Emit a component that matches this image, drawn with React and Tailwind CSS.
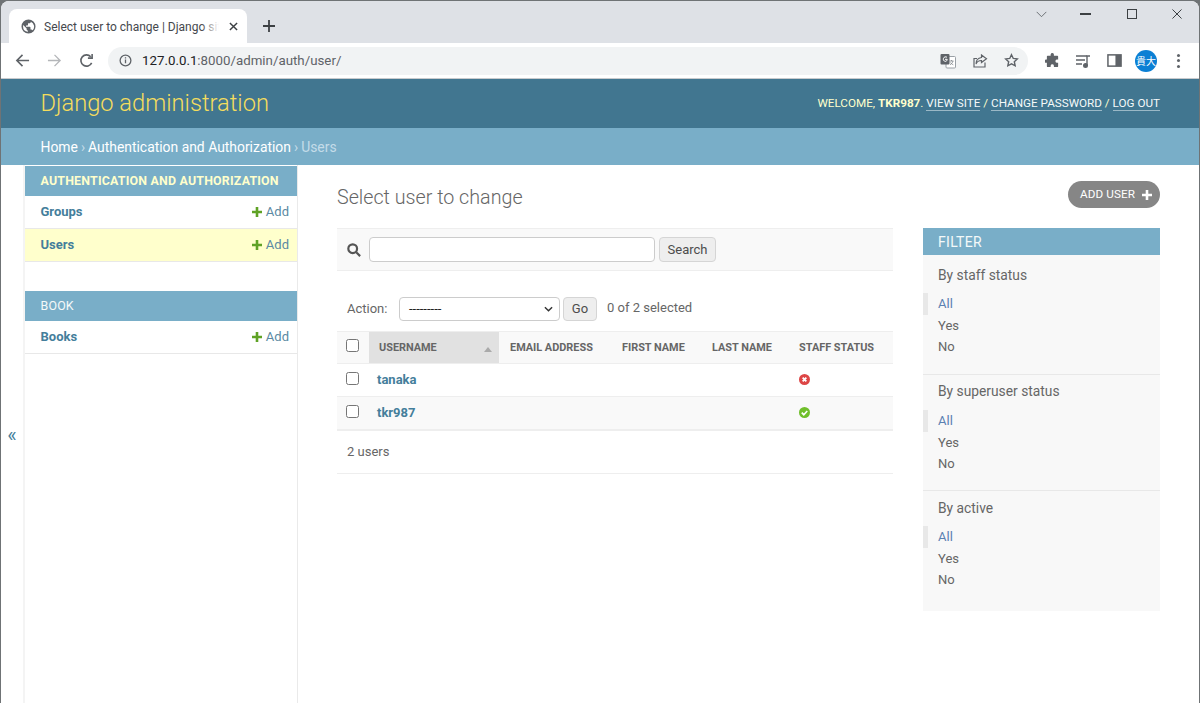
import React from "react";

const font = { fontFamily: "Roboto, sans-serif" };

const Plus = ({ className }) => (
  <svg viewBox="0 0 10 10" className={className} fill="currentColor">
    <path d="M3.7 0h2.6v3.7H10v2.6H6.3V10H3.7V6.3H0V3.7h3.7z" />
  </svg>
);

const SideRow = ({ name, active }) => (
  <div className={`flex items-center justify-between h-[33px] pl-[15.5px] pr-2 border-b border-[#e8e8e8] ${active ? "bg-[#ffffcc]" : "bg-white"}`}>
    <span className="text-[13px] font-bold text-[#447e9b]">{name}</span>
    <span className="flex items-center gap-[4px] text-[13px] text-[#5b8aa3]">
      <Plus className="w-[10px] h-[10px] text-[#5fa225]" />
      Add
    </span>
  </div>
);

const FilterGroup = ({ title, className }) => (
  <div className={`px-[15px] ${className}`}>
    <div className="text-[13.8px] leading-[20px] text-[#666]">{title}</div>
    <div className="mt-[8px] text-[13px] leading-[22px]">
      <div className="relative text-[#5b80b2]">
        <span className="absolute -left-[15px] top-0 w-[5px] h-[22px] bg-[#e8e8e8]" />
        All
      </div>
      <div className="text-[#666] -mt-[0.5px]">Yes</div>
      <div className="text-[#666] -mt-[0.5px]">No</div>
    </div>
  </div>
);

const Check = () => (
  <span className="block w-[13px] h-[13px] rounded-[2.5px] border border-[#767676] bg-white" />
);

const Th = ({ w, children }) => (
  <div className={`${w} pl-2 pt-[1px] flex items-center text-[10.9px] font-bold text-[#666]`}>{children}</div>
);

const UserRow = ({ name, ok, alt }) => (
  <div className={`flex h-[33px] items-center pb-[1px] border-b border-[#eeeeee] ${alt ? "bg-[#f9f9f9]" : "bg-white"}`}>
    <div className="w-[32px] pl-[9px] -mt-[3px]"><Check /></div>
    <div className="w-[430px] pl-2 text-[13px] font-bold text-[#447e9b]">{name}</div>
    <div>
      {ok ? (
        <svg viewBox="0 0 12 12" className="w-[11px] h-[11px]">
          <circle cx="6" cy="6" r="6" fill="#70bf2b" />
          <path d="M3 6.2l2.2 2.2L9 4.4" stroke="#fff" strokeWidth="1.8" fill="none" />
        </svg>
      ) : (
        <svg viewBox="0 0 12 12" className="w-[11px] h-[11px]">
          <circle cx="6" cy="6" r="6" fill="#dd4646" />
          <path d="M4 4l4 4M8 4l-4 4" stroke="#fff" strokeWidth="2" fill="none" />
        </svg>
      )}
    </div>
  </div>
);

const Chrome = () => (
  <div className="shrink-0" style={font}>
    <div className="h-[42px] bg-[#dee1e6] flex items-end pl-[8px] relative">
      <div className="w-[238px] h-[34px] bg-white rounded-t-[8px] flex items-center pl-[12px] pr-[9px]">
        <svg viewBox="0 0 16 16" className="w-[15px] h-[15px] shrink-0 text-[#5f6368]" fill="currentColor">
          <path d="M8 .5a7.5 7.5 0 100 15 7.500 7.500 0 000-15zM2.200 8c0-.6.1-1.100.2-1.600L6 10v.8c0 .8.700 1.500 1.400 1.500v1.400A5.800 5.800 0 012.200 8zm10 4.100c-.2-.6-.7-1-1.400-1h-.7V9c0-.4-.3-.7-.7-.7H5.300V6.800h1.500c.4 0 .7-.3.700-.7V4.600h1.400c.8 0 1.500-.7 1.500-1.500v-.3a5.800 5.800 0 012 9.300z" />
        </svg>
        <span className="relative ml-[8px] pt-[1px] text-[12px] text-[#45484d] whitespace-nowrap overflow-hidden w-[175px]">
          Select user to change | Django site admin
          <span className="absolute right-0 top-0 bottom-0 w-[18px] bg-gradient-to-r from-transparent to-white" />
        </span>
        <svg viewBox="0 0 10 10" className="w-[9px] h-[9px] ml-auto" stroke="#3c4043" strokeWidth="1.6"><path d="M1 1l8 8M9 1l-8 8" /></svg>
      </div>
      <svg viewBox="0 0 12 12" className="w-[12px] h-[12px] ml-[16px] mb-[11px]" stroke="#3c4043" strokeWidth="1.8"><path d="M6 0v12M0 6h12" /></svg>
      <div className="absolute right-0 top-[8px] flex items-center text-[#3c4043]">
        <svg viewBox="0 0 12 8" className="w-[11px] h-[7px] mr-[33px]" stroke="#5f6368" strokeWidth="1" fill="none"><path d="M.5 1L6 6.500 11.500 1" /></svg>
        <div className="w-[11px] h-[1.500px] bg-[#3c4043] mr-[36px]" />
        <div className="w-[10px] h-[10px] border-[1.500px] border-[#3c4043] mr-[35px]" />
        <svg viewBox="0 0 11 11" className="w-[10px] h-[10px] mr-[17px]" stroke="#3c4043" strokeWidth="1.100"><path d="M.5.5l10 10M10.500.500l-10 10" /></svg>
      </div>
    </div>
    <div className="h-[36px] bg-white border-b border-[#c8cacd] flex items-center pl-[14px]">
      <svg viewBox="0 0 16 16" className="w-[15px] h-[15px] text-[#5f6368]" fill="none" stroke="currentColor" strokeWidth="1.700"><path d="M15 8H2M8 2L2 8l6 6" /></svg>
      <svg viewBox="0 0 16 16" className="w-[15px] h-[15px] ml-[17px] text-[#b4b6b9]" fill="none" stroke="currentColor" strokeWidth="1.400"><path d="M1 8h13M8 2l6 6-6 6" /></svg>
      <svg viewBox="0 0 16 16" className="w-[15px] h-[15px] ml-[17px] text-[#5f6368]" fill="none" stroke="currentColor" strokeWidth="1.700"><path d="M13.500 10.500A6 6 0 1112.500 4M14 1v4.500H9.500" /></svg>
      <div className="ml-[14px] w-[920px] h-[28px] rounded-full bg-[#f1f3f4] flex items-center pl-[11px]">
        <svg viewBox="0 0 14 14" className="w-[13px] h-[13px]" fill="none" stroke="#5f6368" strokeWidth="1.400">
          <circle cx="7" cy="7" r="5.800" />
          <path d="M7 6v4M7 3.500v1.400" />
        </svg>
        <span className="ml-[10px] text-[13.3px] text-[#202124]">127.0.0.1<span className="text-[#5f6368]">:8000/admin/auth/user/</span></span>
        <div className="ml-auto flex items-center mr-[9px] gap-[16px] text-[#5f6368]">
          <svg viewBox="0 0 16 16" className="w-[16px] h-[16px]">
            <rect x="6" y="3.500" width="9.500" height="11.500" rx="1" fill="#fff" stroke="#9aa0a6" />
            <path d="M9.500 8h4M11.500 7v1M13 8c-.4 1.600-1.500 3-3 3.700M10.500 9.500c.6 1 1.500 1.800 2.800 2.300" fill="none" stroke="#80868b" strokeWidth=".8" />
            <rect x="0.500" y="1" width="9" height="10.500" rx="1" fill="#5f6368" />
            <path d="M7 4.300A2.300 2.300 0 105.200 8.400c1.200 0 2-.8 2-2.100H5" fill="none" stroke="#fff" strokeWidth="1" />
          </svg>
          <svg viewBox="0 0 16 16" className="w-[16px] h-[16px]" fill="none" stroke="#5f6368" strokeWidth="1.200">
            <path d="M13 9.500v4.500H2V5.500h3M9.500 2l5 3.800-5 3.800V7.500C7 7.500 5 8.500 4 11c0-3.500 2-6 5.500-6.500z" />
          </svg>
          <svg viewBox="0 0 16 16" className="w-[15px] h-[15px]" fill="none" stroke="#5f6368" strokeWidth="1.500">
            <path d="M8 1.800l1.900 4 4.300.5-3.200 3 .9 4.300L8 11.500l-3.900 2.100.9-4.300-3.200-3 4.300-.5z" />
          </svg>
        </div>
      </div>
      <svg viewBox="0 0 16 16" className="w-[15px] h-[15px] ml-[17px]" fill="#5f6368">
        <path d="M6 1.500a1.800 1.800 0 013.500 0V3h3.500c.5 0 1 .5 1 1v3h-1.500a1.800 1.800 0 000 3.500H14V14c0 .5-.5 1-1 1H9.500v-1.500a1.800 1.800 0 00-3.500 0V15H3c-.5 0-1-.5-1-1v-3.500H.8a1.800 1.800 0 010-3.500H2V4c0-.5.500-1 1-1h3z" />
      </svg>
      <svg viewBox="0 0 16 16" className="w-[16px] h-[16px] ml-[15px]" fill="none" stroke="#5f6368" strokeWidth="1.400">
        <path d="M1 3h11M1 7h9M1 11h6" />
        <circle cx="10.500" cy="12.500" r="1.800" fill="#5f6368" />
        <path d="M12 12.500V3h3" />
      </svg>
      <svg viewBox="0 0 16 16" className="w-[15px] h-[15px] ml-[16px]">
        <rect x="1" y="2" width="14" height="12" fill="none" stroke="#5f6368" strokeWidth="1.600" />
        <rect x="9" y="2" width="6" height="12" fill="#5f6368" />
      </svg>
      <div className="ml-[13px] w-[22px] h-[22px] rounded-full bg-[#0b7fd4] text-white text-[10px] flex items-center justify-center" style={{ fontFamily: '"Noto Sans CJK JP", sans-serif' }}>貴大</div>
      <div className="ml-[20px] flex flex-col gap-[2.500px]">
        <span className="w-[3px] h-[3px] rounded-full bg-[#5f6368]" />
        <span className="w-[3px] h-[3px] rounded-full bg-[#5f6368]" />
        <span className="w-[3px] h-[3px] rounded-full bg-[#5f6368]" />
      </div>
    </div>
  </div>
);

export default function App() {
  return (
    <div className="w-[1200px] h-[703px] bg-[#6f7375] overflow-hidden">
      <div className="h-full mx-[1px] mt-[1px] bg-white rounded-tr-[8px] rounded-tl-[8px] overflow-hidden flex flex-col" style={font}>
        <Chrome />
        {/* Django header */}
        <div className="h-[49px] shrink-0 bg-[#417690] flex items-center justify-between pt-[1px] pl-[39.5px] pr-[39px]">
          <span className="text-[23.7px] font-light text-[#f5dd5d]">Django administration</span>
          <span className="text-[11.7px] text-[#ffffcc]">
            WELCOME, <b>TKR987</b>.{" "}
            <span className="text-[#f4f9f9] border-b border-[#9ab8c6]">VIEW SITE</span> /{" "}
            <span className="text-[#f4f9f9] border-b border-[#9ab8c6]">CHANGE PASSWORD</span> /{" "}
            <span className="text-[#f4f9f9] border-b border-[#9ab8c6]">LOG OUT</span>
          </span>
        </div>
        <div className="h-[37px] shrink-0 bg-[#79aec8] flex items-center pt-[1px] pl-[39.5px] text-[13.9px] text-white">
          Home<span className="text-[#c4dce8] mx-[3px]">›</span>Authentication and Authorization<span className="text-[#c4dce8] mx-[3px]">›</span><span className="text-[#c4dce8]">Users</span>
        </div>
        <div className="flex-1 flex min-h-0">
          {/* collapse toggle */}
          <div className="w-[24px] shrink-0 border-r border-[#eaeaea] flex items-center justify-center -translate-x-[0.5px]">
            <span className="text-[20px] leading-none text-[#447e9b]">«</span>
          </div>
          {/* sidebar */}
          <div className="w-[273px] shrink-0 border-r border-[#eaeaea] pt-[1px]">
            <div className="h-[30px] bg-[#79aec8] flex items-center pl-[15.5px] text-[12.4px] font-bold tracking-[0.2px] text-[#ffffcc]">AUTHENTICATION AND AUTHORIZATION</div>
            <SideRow name="Groups" />
            <SideRow name="Users" active />
            <div className="h-[29px]" />
            <div className="h-[30px] bg-[#79aec8] flex items-center pl-[15.5px] text-[12.4px] tracking-[0.2px] text-[#f4f9f9]">BOOK</div>
            <SideRow name="Books" />
          </div>
          {/* content */}
          <div className="flex-1 pl-[39px] pr-[39px] pt-[21px] min-w-0">
            <div className="flex items-start justify-between h-[42px]">
              <h1 className="text-[19.7px] font-light text-[#666] leading-[24px]">Select user to change</h1>
              <div className="h-[27px] w-[92px] rounded-full bg-[#868686] flex items-center pl-[12px] text-[11.7px] text-white -mt-[5px] tracking-[0.1px]">
                ADD USER
                <Plus className="w-[10px] h-[10px] ml-[7px]" />
              </div>
            </div>
            <div className="flex gap-[30px]">
              <div className="w-[556px] shrink-0">
                <div className="h-[43px] bg-[#f9f9f9] border-y border-[#eeeeee] flex items-center pl-[10px]">
                  <svg viewBox="0 0 16 16" className="w-[14px] h-[14px] text-[#555]" fill="none" stroke="currentColor" strokeWidth="2.500"><circle cx="6.500" cy="6.500" r="5" /><path d="M10.500 10.500l4.500 4.500" /></svg>
                  <div className="ml-[8px] w-[286px] h-[25px] bg-white border border-[#cccccc] rounded-[4px]" />
                  <div className="ml-[4px] w-[57px] h-[25px] rounded-[4px] bg-[#eeeeee] border border-[#d5d5d5] flex items-center justify-center text-[13px] text-[#4c4c4c]">Search</div>
                </div>
                <div className="h-[60px] flex items-center pl-[10px] text-[13px] text-[#666] pt-[16px]">
                  <span className="w-[52px] -mt-[1px]">Action:</span>
                  <div className="w-[161px] h-[24px] bg-white border border-[#cccccc] rounded-[4px] flex items-center justify-between pl-[9px] pr-[6px] text-[#222]">
                    ---------
                    <svg viewBox="0 0 10 6" className="w-[9px] h-[6px]" fill="none" stroke="#333" strokeWidth="1.600"><path d="M1 1l4 4 4-4" /></svg>
                  </div>
                  <div className="ml-[3px] w-[34px] h-[24px] rounded-[4px] bg-[#eeeeee] border border-[#d5d5d5] flex items-center justify-center text-[13px] text-[#4c4c4c]">Go</div>
                  <span className="ml-[10px] -mt-[2px]">0 of 2 selected</span>
                </div>
                {/* table */}
                <div className="flex h-[33px] bg-[#f9f9f9] border-y border-[#eeeeee]">
                  <div className="w-[32px] pl-[9px] pt-[7px]"><Check /></div>
                  <div className="w-[130px] pl-[10px] pt-[1px] flex items-center justify-between pr-[7px] bg-[#e1e1e1] text-[10.9px] font-bold text-[#666]">
                    USERNAME
                    <span className="w-0 h-0 border-x-[4px] border-x-transparent border-b-[5px] border-b-[#aaaaaa] mt-[3px]" />
                  </div>
                  <Th w="w-[112px] ml-[3px]">EMAIL ADDRESS</Th>
                  <Th w="w-[90px]">FIRST NAME</Th>
                  <Th w="w-[87px]">LAST NAME</Th>
                  <Th w="w-[100px]">STAFF STATUS</Th>
                </div>
                <UserRow name="tanaka" />
                <UserRow name="tkr987" ok alt />
                <div className="h-[44px] border-b border-t border-[#eeeeee] flex items-center pl-[10px] text-[13px] text-[#666]">2 users</div>
              </div>
              <div className="w-[237px] shrink-0 self-start bg-[#f8f8f8]">
                <div className="h-[27px] pt-[1px] bg-[#79aec8] flex items-center pl-[15px] text-[14px] text-[#f4f9f9] tracking-[0.3px]">FILTER</div>
                <FilterGroup title="By staff status" className="h-[120px] pt-[10px] border-b border-[#e8e8e8]" />
                <FilterGroup title="By superuser status" className="h-[116px] pt-[6px] border-b border-[#e8e8e8] [&>div:last-child]:mt-[9px]" />
                <FilterGroup title="By active" className="h-[120px] pt-[7px]" />
              </div>
            </div>
          </div>
        </div>
      </div>
    </div>
  );
}
